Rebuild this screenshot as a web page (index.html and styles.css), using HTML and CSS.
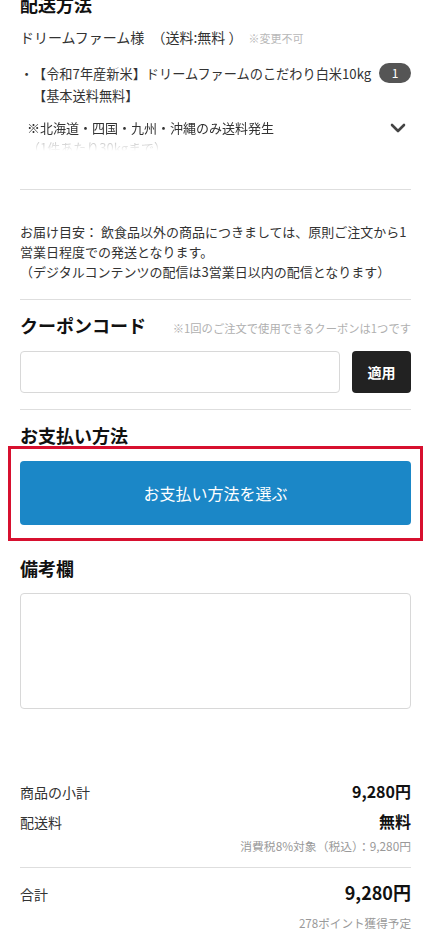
FILE: index.html
```html
<!DOCTYPE html>
<html lang="ja">
<head>
<meta charset="utf-8">
<title>ご注文手続き</title>
<link rel="stylesheet" href="styles.css">
</head>
<body>
<main class="page">
  <section class="shipping">
    <h2 class="sec-title">配送方法</h2>
    <p class="shop">ドリームファーム様 <span class="shop-fee">（送料:無料 ）</span><span class="shop-note">※変更不可</span></p>
    <div class="item">
      <span class="item-bullet">・</span>
      <p class="item-name">【令和7年産新米】ドリームファームのこだわり白米10kg<br>【基本送料無料】</p>
      <span class="item-qty">1</span>
    </div>
    <div class="note-row">
      <div class="note-body">
        <p class="note-line">※北海道・四国・九州・沖縄のみ送料発生</p>
        <p class="note-line">（1件あたり30kgまで）</p>
      </div>
      <svg class="chevron" width="16" height="10" viewBox="0 0 16 10"><polyline points="2,2 8,8 14,2" fill="none" stroke="#444" stroke-width="2.6" stroke-linecap="round" stroke-linejoin="round"/></svg>
    </div>
  </section>

  <hr class="divider gap-38">

  <p class="delivery">お届け目安： 飲食品以外の商品につきましては、原則ご注文から1<br>営業日程度での発送となります。<br>（デジタルコンテンツの配信は3営業日以内の配信となります）</p>

  <hr class="divider gap-17">

  <section class="coupon">
    <div class="coupon-head">
      <h2 class="sec-title">クーポンコード</h2>
      <span class="coupon-note">※1回のご注文で使用できるクーポンは1つです</span>
    </div>
    <div class="coupon-row">
      <input class="coupon-input" type="text" aria-label="クーポンコード">
      <button class="coupon-btn" type="button">適用</button>
    </div>
  </section>

  <hr class="divider gap-16">

  <section class="payment">
    <h2 class="sec-title">お支払い方法</h2>
    <div class="highlight">
      <button class="pay-btn" type="button">お支払い方法を選ぶ</button>
    </div>
  </section>

  <section class="remarks">
    <h2 class="sec-title">備考欄</h2>
    <textarea class="remarks-box" aria-label="備考欄"></textarea>
  </section>

  <section class="totals">
    <div class="total-row"><span class="t-label">商品の小計</span><span class="t-value">9,280円</span></div>
    <div class="total-row"><span class="t-label">配送料</span><span class="t-value">無料</span></div>
    <p class="tax-note">消費税8%対象（税込）：9,280円</p>
    <hr class="divider gap-12">
    <div class="total-row grand"><span class="t-label">合計</span><span class="t-value">9,280円</span></div>
    <p class="points">278ポイント獲得予定</p>
  </section>
</main>
</body>
</html>
```

FILE: styles.css
```css
* { box-sizing: border-box; }

body {
  margin: 0;
  background: #fff;
  color: #333;
  font-family: "Noto Sans CJK JP", "Noto Sans", sans-serif;
}

.page {
  margin-top: -8px;
  padding: 0 19px 0 20px;
}

p { margin: 0; }

.sec-title {
  margin: 0;
  font-size: 18px;
  line-height: 24px;
  font-weight: 700;
  color: #111;
}

/* shipping */
.shop {
  margin-top: 11px;
  font-size: 14px;
  line-height: 20px;
  color: #333;
}
.shop-fee { margin-left: 4px; }
.shop-note {
  margin-left: 6px;
  font-size: 11px;
  color: #b8b8b8;
}

.item {
  margin-top: 15px;
  display: flex;
  align-items: flex-start;
  font-size: 13.2px;
  line-height: 22px;
}
.item-bullet {
  flex: none;
  width: 13px;
  display: flex;
  justify-content: center;
  white-space: nowrap;
}
.item-name {
  flex: 1;
  min-width: 0;
}
.item-qty {
  flex: none;
  width: 32px;
  height: 20px;
  border-radius: 10px;
  background: #555;
  color: #fff;
  font-size: 12px;
  line-height: 20px;
  text-align: center;
}

.note-row {
  margin-top: 11px;
  display: flex;
  align-items: flex-start;
  justify-content: space-between;
}
.note-body {
  height: 33px;
  overflow: hidden;
  padding-left: 7px;
  -webkit-mask-image: linear-gradient(to bottom, #000 55%, rgba(0,0,0,0.25) 75%, rgba(0,0,0,0) 100%);
  mask-image: linear-gradient(to bottom, #000 55%, rgba(0,0,0,0.25) 75%, rgba(0,0,0,0) 100%);
}
.note-line {
  font-size: 13px;
  line-height: 20px;
  color: #333;
}
.chevron {
  flex: none;
  margin-top: 5px;
  margin-right: 5px;
}

/* dividers */
.divider {
  margin: 0;
  border: 0;
  height: 1px;
  background: #dedede;
}
.gap-38 { margin-top: 38px; }
.gap-17 { margin-top: 17px; }
.gap-16 { margin-top: 16px; }
.gap-12 { margin-top: 12px; }

/* delivery */
.delivery {
  margin-top: 32px;
  font-size: 13px;
  line-height: 20px;
  color: #333;
}

/* coupon */
.coupon-head {
  margin-top: 13px;
  display: flex;
  align-items: baseline;
  justify-content: space-between;
}
.coupon-note {
  font-size: 11.3px;
  color: #b0b0b0;
  white-space: nowrap;
}
.coupon-row {
  margin-top: 14px;
  display: flex;
  gap: 12px;
}
.coupon-input {
  flex: 1;
  min-width: 0;
  height: 42px;
  border: 1.5px solid #d8d8d8;
  border-radius: 4px;
  background: #fff;
  font: inherit;
}
.coupon-btn {
  flex: none;
  width: 59px;
  height: 42px;
  border: 0;
  border-radius: 4px;
  background: #222;
  color: #fff;
  font-family: inherit;
  font-size: 14px;
  font-weight: 700;
}

/* payment */
.payment .sec-title { margin-top: 13px; }
.highlight {
  margin: -1px -12px 0 -12px;
  padding: 12px 9px 13px 9px;
  border: 3px solid #d7102f;
}
.pay-btn {
  display: block;
  width: 100%;
  height: 64px;
  border: 0;
  border-radius: 4px;
  background: #1b87c7;
  color: #fff;
  font-family: inherit;
  font-size: 16px;
}

/* remarks */
.remarks .sec-title { margin-top: 15px; }
.remarks-box {
  display: block;
  width: 100%;
  height: 116px;
  margin-top: 13px;
  border: 1.5px solid #d8d8d8;
  border-radius: 4px;
  resize: none;
  font: inherit;
}

/* totals */
.totals { margin-top: 68px; }
.total-row {
  display: flex;
  align-items: baseline;
  justify-content: space-between;
  line-height: 29px;
}
.t-label {
  font-size: 14px;
  color: #333;
}
.t-value {
  font-size: 16px;
  font-weight: 700;
  color: #111;
}
.tax-note {
  font-size: 11.8px;
  line-height: 18px;
  color: #999;
  text-align: right;
}
.grand {
  margin-top: 9px;
  line-height: 30px;
}
.grand .t-value { font-size: 18px; }
.points {
  margin-top: 5px;
  font-size: 11.6px;
  line-height: 18px;
  color: #999;
  text-align: right;
}
```
